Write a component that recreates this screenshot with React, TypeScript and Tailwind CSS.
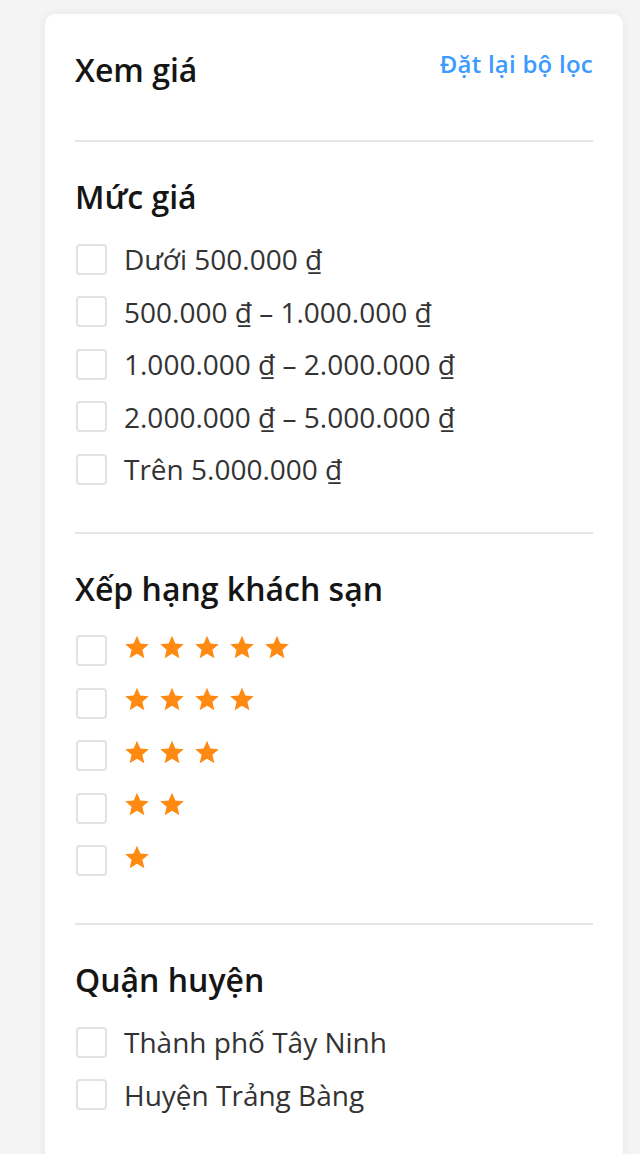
import React from 'react';

const prices = [
  'Dưới 500.000 ₫',
  '500.000 ₫ – 1.000.000 ₫',
  '1.000.000 ₫ – 2.000.000 ₫',
  '2.000.000 ₫ – 5.000.000 ₫',
  'Trên 5.000.000 ₫',
];

const districts = ['Thành phố Tây Ninh', 'Huyện Trảng Bàng'];

const Star = () => (
  <svg viewBox="0 0 24 24" className="w-[26px] h-[26px]" fill="#ff8a12">
    <path d="M12 1.6l3.1 7.2 7.8.7-5.9 5.1 1.8 7.7L12 18.3l-6.8 4 1.8-7.7-5.9-5.1 7.8-.7z" />
  </svg>
);

const Row = ({ children }: { children: React.ReactNode }) => (
  <label className="flex items-center gap-[17px] h-[52.5px] cursor-pointer">
    <span className="ml-px w-[31px] h-[31px] shrink-0 rounded-[4px] border-2 border-[#e2e2e2] bg-white" />
    {children}
  </label>
);

const Section = ({ title, children }: { title: string; children: React.ReactNode }) => (
  <div className="pt-[35px] pb-[36px] border-t-2 border-[#e6e6e6]">
    <h3 className="text-[32px] font-semibold text-[#151515] leading-[40px] mb-[16px]">{title}</h3>
    <div className="flex flex-col">{children}</div>
  </div>
);

export default function App() {
  return (
    <div className="min-h-[1154px] bg-[#f4f4f4] pl-[45px] pr-[17px] pt-[14px] font-['Open_Sans','Noto_Sans',sans-serif]">
      <div className="bg-white rounded-[10px] shadow-[0_0_10px_rgba(0,0,0,0.06)] px-[30px] min-h-[1160px]">
        <div className="flex items-center justify-between pt-[34px] pb-[48px]">
          <h2 className="text-[32px] font-semibold text-[#151515] leading-[40px]">Xem giá</h2>
          <button className="text-[24px] font-semibold tracking-[0.25px] text-[#3d9bff] leading-[32px] mb-[12px]">Đặt lại bộ lọc</button>
        </div>

        <Section title="Mức giá">
          {prices.map((p) => (
            <Row key={p}>
              <span className="text-[28px] text-[#333] leading-[36px]">{p}</span>
            </Row>
          ))}
        </Section>

        <Section title="Xếp hạng khách sạn">
          {[5, 4, 3, 2, 1].map((n) => (
            <Row key={n}>
              <span className="flex gap-[9px] mb-[8px]">
                {Array.from({ length: n }).map((_, i) => (
                  <Star key={i} />
                ))}
              </span>
            </Row>
          ))}
        </Section>

        <Section title="Quận huyện">
          {districts.map((d) => (
            <Row key={d}>
              <span className="text-[28px] text-[#333] leading-[36px]">{d}</span>
            </Row>
          ))}
        </Section>
      </div>
    </div>
  );
}
